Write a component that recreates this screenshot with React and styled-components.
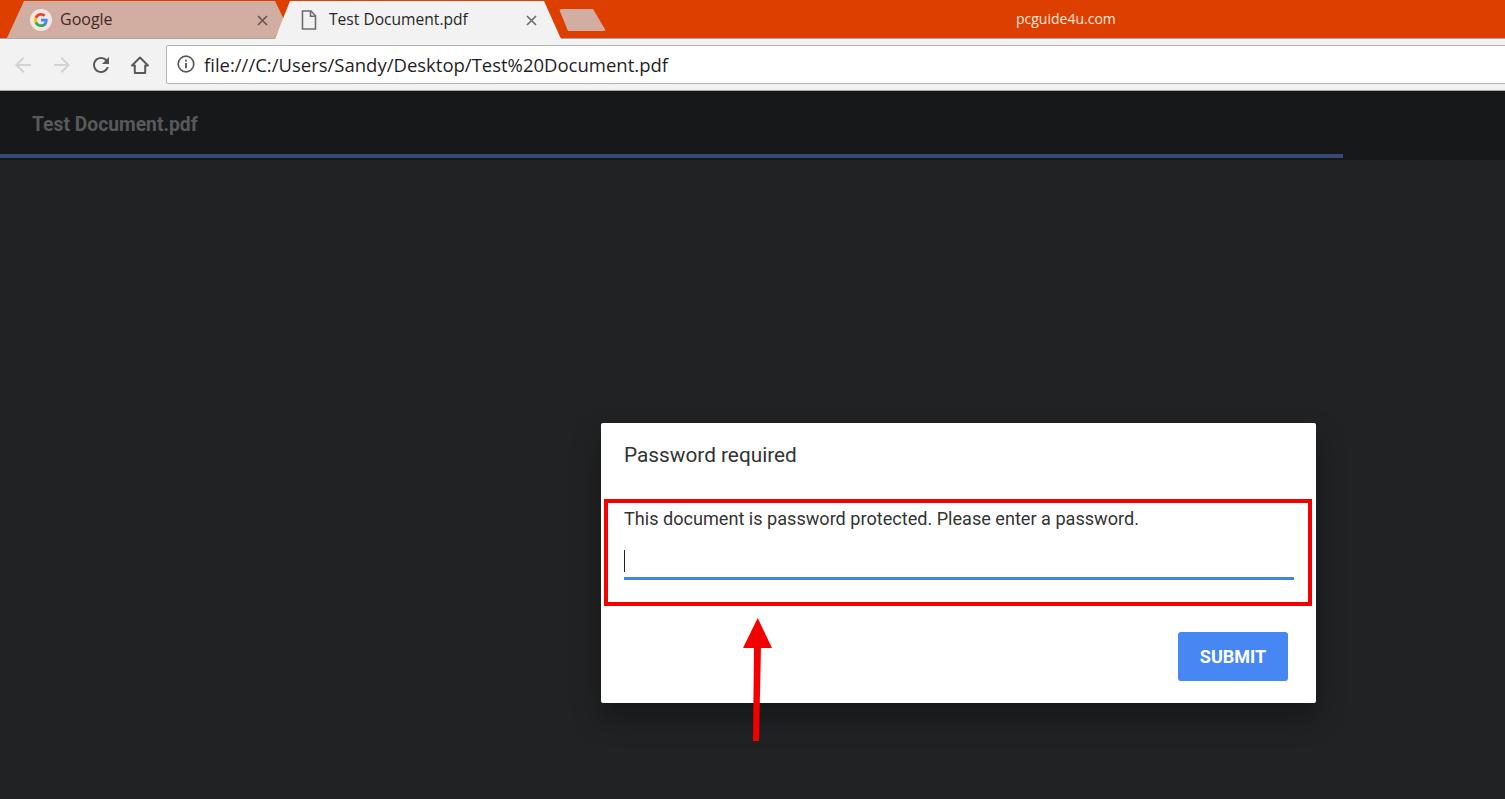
import React from "react";
import styled, { createGlobalStyle } from "styled-components";

const GlobalStyle = createGlobalStyle`
  html, body {
    margin: 0;
    padding: 0;
    background: #212224;
  }
  * {
    box-sizing: border-box;
  }
`;

const Page = styled.div`
  width: 1505px;
  height: 799px;
  overflow: hidden;
  display: flex;
  flex-direction: column;
  background: #212224;
`;

const TabStrip = styled.div`
  height: 39px;
  flex: none;
  display: flex;
  align-items: flex-end;
  padding-left: 7px;
  background: #dc3f00;
  border-bottom: 1px solid #a9a5a3;
`;

const Tab = styled.div`
  position: relative;
  flex: none;
  display: flex;
  align-items: center;
  height: ${(p) => (p.$active ? "38px" : "37px")};
  width: ${(p) => (p.$active ? "286px" : "277px")};
  margin-left: ${(p) => (p.$active ? "-9px" : "0")};
  margin-bottom: ${(p) => (p.$active ? "-1px" : "0")};
  padding-left: ${(p) => (p.$active ? "26px" : "23px")};
  background: ${(p) => (p.$active ? "#f2f2f2" : "#d2aea2")};
  z-index: ${(p) => (p.$active ? 2 : 1)};
  clip-path: ${(p) =>
    p.$active
      ? "polygon(0 100%, 15px 0, 269px 0, 286px 100%)"
      : "polygon(0 100%, 17px 0, 268px 0, 277px 50%, 268px 100%)"};
`;

const TabTitle = styled.span`
  margin: 0 0 2px ${(p) => (p.$active ? "12px" : "8px")};
  font: ${(p) => (p.$active ? "15.6px" : "16px")} "Open Sans", sans-serif;
  color: ${(p) => (p.$active ? "#262626" : "#3f2a24")};
  white-space: nowrap;
`;

const TabClose = styled.svg`
  position: absolute;
  right: ${(p) => (p.$active ? "24px" : "16px")};
  top: 14px;
  width: 11px;
  height: 11px;
  stroke: ${(p) => (p.$active ? "#6d6d6d" : "#6a5650")};
  stroke-width: 1.7;
`;

const NewTab = styled.div`
  flex: none;
  width: 47px;
  height: 22px;
  margin: 0 0 7px -2px;
  background: #d2aea2;
  border-radius: 3px;
  clip-path: polygon(0 0, 34px 0, 47px 100%, 9px 100%);
`;

const Watermark = styled.span`
  margin: 0 0 10px 410px;
  font: 14px "Open Sans", sans-serif;
  color: #ffe9de;
`;

const Toolbar = styled.div`
  height: 52px;
  flex: none;
  display: flex;
  align-items: center;
  padding-left: 11px;
  background: #f2f2f2;
  border-bottom: 1px solid #a8a8a8;
`;

const NavIcon = styled.svg`
  flex: none;
  width: 24px;
  height: 24px;
  margin-right: ${(p) => p.$gap}px;
  fill: ${(p) => p.$color};
`;

const Omnibox = styled.div`
  flex: 1;
  height: 39px;
  margin: 0 -4px 1px 14px;
  display: flex;
  align-items: center;
  padding-left: 10px;
  background: #fff;
  border: 1px solid #b4b4b4;
  border-radius: 2px;
`;

const UrlText = styled.span`
  margin-left: 9px;
  font: 18.5px "Open Sans", sans-serif;
  color: #1f1f1f;
`;

const ViewerHeader = styled.div`
  position: relative;
  height: 69px;
  flex: none;
  display: flex;
  align-items: flex-start;
  padding: 22px 0 0 32px;
  background: #17181a;
  font: 700 19.3px Roboto, sans-serif;
  color: #58595b;
`;

const Progress = styled.div`
  position: absolute;
  left: 0;
  top: 63px;
  height: 4px;
  background: #364a73;
`;

const Stage = styled.main`
  flex: 1;
  padding: 263px 0 0 601px;
`;

const Dialog = styled.section`
  position: relative;
  width: 715px;
  height: 280px;
  padding: 20px 23px 0;
  display: flex;
  flex-direction: column;
  background: #fff;
  border-radius: 2px;
  box-shadow: 0 14px 28px rgba(0, 0, 0, 0.35);
  font-family: Roboto, sans-serif;
`;

const DialogTitle = styled.h2`
  margin: 0;
  font-size: 20.8px;
  line-height: 24px;
  font-weight: 400;
  color: #333;
`;

const Message = styled.p`
  margin: 41px 0 0;
  font-size: 18.1px;
  line-height: 22px;
  color: #333;
`;

const PasswordField = styled.div`
  height: 39px;
  margin-top: 11px;
  width: 670px;
  padding-top: 9px;
  border-bottom: 3px solid #4285e4;
`;

const Caret = styled.div`
  width: 1px;
  height: 22px;
  background: #222;
`;

const Actions = styled.div`
  display: flex;
  justify-content: flex-end;
  margin: 52px 5px 0 0;
`;

const SubmitButton = styled.button`
  width: 110px;
  height: 49px;
  border: 0;
  border-radius: 3px;
  background: #4687f4;
  color: #fff;
  font: 700 18px Roboto, sans-serif;
`;

const Highlight = styled.div`
  position: absolute;
  left: 3px;
  top: 76px;
  width: 708px;
  height: 107px;
  border: 4px solid #f40000;
  pointer-events: none;
`;

const Arrow = styled.svg`
  position: absolute;
  left: 137px;
  top: 193px;
  width: 36px;
  height: 128px;
  overflow: visible;
`;

const GoogleIcon = () => (
  <svg width="22" height="22" viewBox="0 0 22 22">
    <circle cx="11" cy="11" r="11" fill="#efe7e3" />
    <path fill="#4285f4" d="M17.6 11.2c0-.5 0-1-.1-1.4H11v2.7h3.7c-.2.9-.6 1.600-1.300 2.100v1.800h2.200c1.300-1.200 2-2.900 2-5.200z" />
    <path fill="#34a853" d="M11 18c1.800 0 3.400-.6 4.600-1.600l-2.200-1.800c-.6.400-1.400.7-2.400.7-1.800 0-3.300-1.200-3.900-2.900H4.800v1.800C5.900 16.500 8.300 18 11 18z" />
    <path fill="#fbbc05" d="M7.100 12.400c-.3-.9-.3-1.900 0-2.800V7.800H4.800c-.8 1.500-.8 4.900 0 6.400z" />
    <path fill="#ea4335" d="M11 6.800c1 0 1.900.4 2.600 1l2-2C14.400 4.700 12.800 4 11 4 8.300 4 5.900 5.500 4.800 7.800l2.300 1.800C7.700 8 9.200 6.800 11 6.800z" />
  </svg>
);

const DocIcon = () => (
  <svg width="16" height="20" viewBox="0 0 16 20" fill="none" stroke="#6d6d6d" strokeWidth="1.6">
    <path d="M1.500 1h8.500l4.500 4.800V19h-13z" />
    <path d="M9.500 1v5.300h5" />
  </svg>
);

const CloseGlyph = ({ active }) => (
  <TabClose $active={active} viewBox="0 0 11 11">
    <path d="M1 1l9 9M10 1l-9 9" />
  </TabClose>
);

export default function App() {
  return (
    <Page>
      <GlobalStyle />
      <TabStrip>
        <Tab>
          <GoogleIcon />
          <TabTitle>Google</TabTitle>
          <CloseGlyph />
        </Tab>
        <Tab $active>
          <DocIcon />
          <TabTitle $active>Test Document.pdf</TabTitle>
          <CloseGlyph active />
        </Tab>
        <NewTab />
        <Watermark>pcguide4u.com</Watermark>
      </TabStrip>
      <Toolbar>
        <NavIcon $gap={15} $color="#d3d3d3" viewBox="0 0 24 24">
          <path d="M20 11H7.830l5.590-5.590L12 4l-8 8 8 8 1.410-1.410L7.830 13H20v-2z" />
        </NavIcon>
        <NavIcon $gap={15} $color="#d3d3d3" viewBox="0 0 24 24">
          <path d="M4 11h12.170l-5.590-5.590L12 4l8 8-8 8-1.410-1.410L16.170 13H4v-2z" />
        </NavIcon>
        <NavIcon $gap={15} $color="#5a5a5a" viewBox="0 0 24 24">
          <path d="M17.650 6.350C16.200 4.900 14.210 4 12 4c-4.420 0-7.990 3.580-7.990 8s3.570 8 7.990 8c3.730 0 6.840-2.550 7.730-6h-2.080c-.82 2.330-3.040 4-5.650 4-3.310 0-6-2.690-6-6s2.690-6 6-6c1.660 0 3.140.69 4.220 1.780L13 11h7V4l-2.350 2.350z" />
        </NavIcon>
        <NavIcon $gap={0} $color="none" viewBox="0 0 24 24">
          <path d="M12 4.500L4 12.500h2.800V20h10.400v-7.500H20z" stroke="#5a5a5a" strokeWidth="2" strokeLinejoin="round" />
        </NavIcon>
        <Omnibox>
          <svg width="18" height="18" viewBox="0 0 18 18" fill="none">
            <circle cx="9" cy="9" r="7.800" stroke="#5a5a5a" strokeWidth="1.700" />
            <path d="M9 8v5.200M9 4.800v1.700" stroke="#5a5a5a" strokeWidth="1.900" />
          </svg>
          <UrlText>file:///C:/Users/Sandy/Desktop/Test%20Document.pdf</UrlText>
        </Omnibox>
      </Toolbar>
      <ViewerHeader>
        Test Document.pdf
        <Progress style={{ width: "1343px" }} />
      </ViewerHeader>
      <Stage>
        <Dialog>
          <DialogTitle>Password required</DialogTitle>
          <Message>This document is password protected. Please enter a password.</Message>
          <PasswordField>
            <Caret />
          </PasswordField>
          <Actions>
            <SubmitButton>SUBMIT</SubmitButton>
          </Actions>
          <Highlight />
          <Arrow viewBox="0 0 36 128">
            <path d="M19.700 2L34 32H5z" fill="#f50000" />
            <path d="M16 30h7l-2 95h-6z" fill="#f50000" />
          </Arrow>
        </Dialog>
      </Stage>
    </Page>
  );
}
